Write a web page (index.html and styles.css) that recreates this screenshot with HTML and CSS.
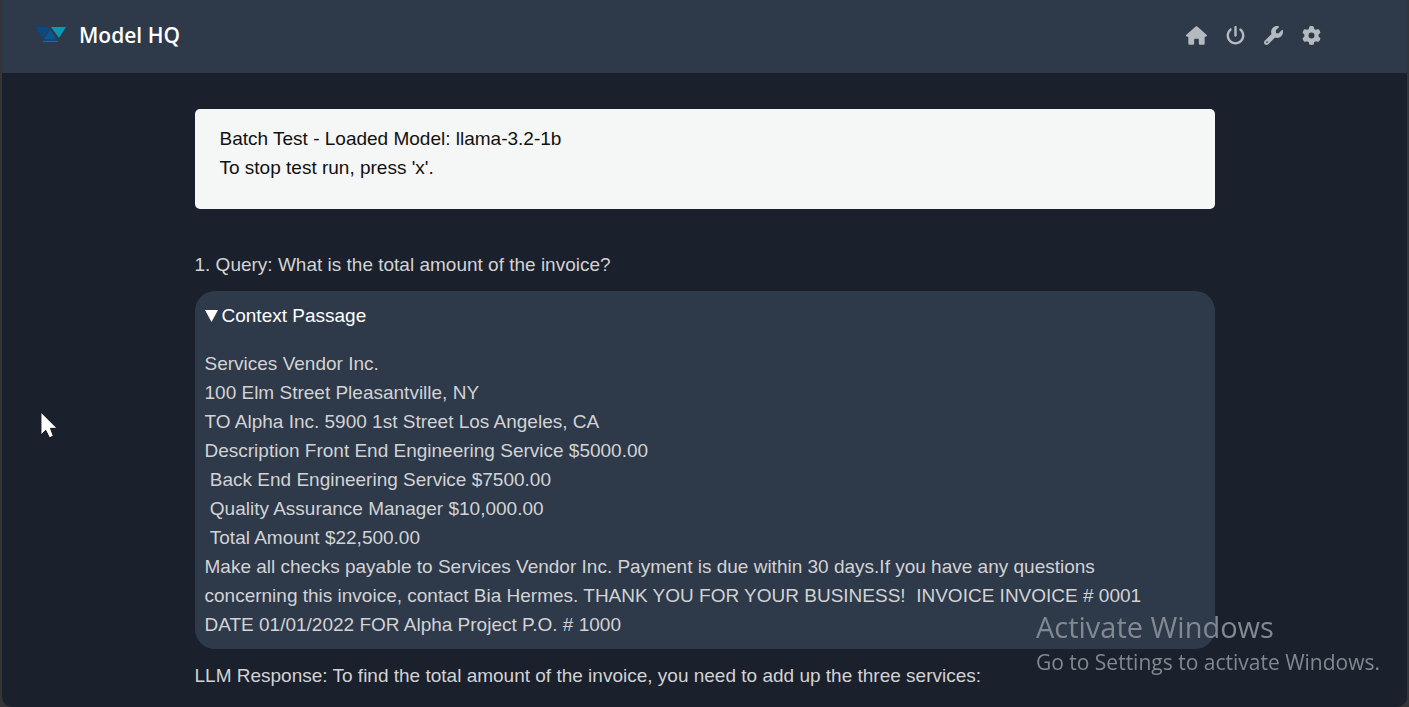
FILE: index.html
```html
<!DOCTYPE html>
<html lang="en">
<head>
<meta charset="utf-8">
<meta name="viewport" content="width=device-width, initial-scale=1">
<title>Model HQ</title>
<link rel="stylesheet" href="styles.css">
</head>
<body>
<div class="window">
  <header class="topbar">
    <a class="brand" href="#">
      <svg class="brand-logo" viewBox="0 0 32 18" aria-hidden="true">
        <path fill="#0b4a80" d="M0 1H15L8 12Z"/>
        <path fill="#0a5690" d="M15 3L21 13H9Z"/>
        <path fill="#0b4a80" d="M9 13H21L23 15H8Z"/>
        <path fill="#0d6f9c" d="M8 15H23V16H8Z"/>
        <path fill="#0a98b8" d="M16 1H31L24 12Z"/>
      </svg>
      <span class="brand-name">Model HQ</span>
    </a>
    <nav class="actions" aria-label="Main">
      <button class="action" type="button" aria-label="Home">
        <svg class="icon icon-wide" viewBox="0 0 576 512"><path d="M576 256c0 18-15 32-32 32h-32v184c0 22-18 40-40 40h-80c-22 0-40-18-40-40V376c0-18-14-32-32-32h-64c-18 0-32 14-32 32v96c0 22-18 40-40 40h-80c-22 0-40-18-40-40V288H32c-18 0-32-14-32-32 0-9 3-17 10-24L266 8c7-7 15-8 22-8s15 2 21 7l255 225c8 7 12 15 12 24z"/></svg>
      </button>
      <button class="action" type="button" aria-label="Power">
        <svg class="icon" viewBox="0 0 512 512"><path d="M288 32c0-17.700-14.300-32-32-32s-32 14.300-32 32l0 224c0 17.700 14.300 32 32 32s32-14.300 32-32l0-224zM143.500 120.600c13.600-11.300 15.400-31.500 4.100-45.100s-31.500-15.400-45.100-4.100C49.700 115.400 16 181.800 16 256c0 132.500 107.500 240 240 240s240-107.500 240-240c0-74.200-33.800-140.600-86.600-184.600c-13.600-11.300-33.800-9.400-45.100 4.100s-9.400 33.800 4.100 45.100c38.900 32.300 63.500 81 63.500 135.400c0 97.200-78.800 176-176 176s-176-78.800-176-176c0-54.400 24.700-103.100 63.500-135.400z"/></svg>
      </button>
      <button class="action" type="button" aria-label="Tools">
        <svg class="icon" viewBox="0 0 512 512"><path d="M352 320c88.400 0 160-71.600 160-160c0-15.300-2.200-30.100-6.200-44.200c-3.100-10.800-16.400-13.200-24.300-5.300l-76.800 76.800c-3 3-7.100 4.700-11.300 4.700L336 192c-8.800 0-16-7.200-16-16l0-57.400c0-4.200 1.700-8.300 4.700-11.300l76.800-76.800c7.900-7.900 5.400-21.200-5.300-24.300C382.100 2.200 367.300 0 352 0C263.600 0 192 71.600 192 160c0 19.100 3.400 37.500 9.500 54.500L19.900 396.100C7.200 408.800 0 426.100 0 444.100C0 481.600 30.400 512 67.900 512c18 0 35.300-7.200 48-19.900L297.500 310.500c17 6.200 35.400 9.500 54.500 9.500zM80 408a24 24 0 1 1 0 48 24 24 0 1 1 0-48z"/></svg>
      </button>
      <button class="action" type="button" aria-label="Settings">
        <svg class="icon" viewBox="0 0 512 512"><path d="M495.900 166.600c3.200 8.700 .5 18.400-6.400 24.600l-43.300 39.400c1.100 8.300 1.700 16.800 1.700 25.400s-.6 17.100-1.700 25.400l43.300 39.400c6.900 6.200 9.600 15.900 6.400 24.600c-4.400 11.900-9.700 23.300-15.800 34.300l-4.700 8.100c-6.600 11-14 21.400-22.100 31.200c-5.900 7.200-15.700 9.600-24.500 6.800l-55.700-17.700c-13.400 10.300-28.200 18.900-44 25.400l-12.500 57.100c-2 9.100-9 16.300-18.200 17.800c-13.800 2.300-28 3.500-42.500 3.500s-28.700-1.200-42.500-3.500c-9.200-1.500-16.200-8.700-18.200-17.800l-12.500-57.100c-15.800-6.500-30.600-15.100-44-25.400L83.100 425.900c-8.800 2.800-18.600 .3-24.500-6.800c-8.100-9.800-15.500-20.200-22.100-31.200l-4.700-8.100c-6.100-11-11.400-22.400-15.800-34.300c-3.200-8.700-.5-18.400 6.400-24.600l43.300-39.400C64.600 273.100 64 264.600 64 256s.6-17.100 1.700-25.400L22.400 191.200c-6.900-6.200-9.600-15.900-6.400-24.600c4.400-11.900 9.700-23.300 15.800-34.300l4.700-8.100c6.600-11 14-21.400 22.100-31.200c5.900-7.200 15.700-9.600 24.500-6.800l55.700 17.700c13.400-10.300 28.200-18.900 44-25.400l12.500-57.100c2-9.100 9-16.300 18.200-17.800C227.300 1.200 241.500 0 256 0s28.700 1.200 42.500 3.500c9.200 1.500 16.200 8.700 18.200 17.800l12.500 57.100c15.800 6.500 30.600 15.100 44 25.400l55.700-17.700c8.800-2.800 18.600-.3 24.500 6.800c8.100 9.800 15.500 20.200 22.100 31.200l4.700 8.100c6.100 11 11.400 22.400 15.800 34.300zM256 336a80 80 0 1 0 0-160 80 80 0 1 0 0 160z"/></svg>
      </button>
    </nav>
  </header>

  <main class="content">
    <section class="notice">
      <p>Batch Test - Loaded Model: llama-3.2-1b</p>
      <p>To stop test run, press 'x'.</p>
    </section>

    <p class="query">1. Query: What is the total amount of the invoice?</p>

    <details class="passage" open>
      <summary class="passage-title"><svg class="marker" viewBox="0 0 12 12" aria-hidden="true"><path d="M0 1H12L6 12Z"/></svg>Context Passage</summary>
      <div class="passage-text">Services Vendor Inc.
100 Elm Street Pleasantville, NY
TO Alpha Inc. 5900 1st Street Los Angeles, CA
Description Front End Engineering Service $5000.00
 Back End Engineering Service $7500.00
 Quality Assurance Manager $10,000.00
 Total Amount $22,500.00
Make all checks payable to Services Vendor Inc. Payment is due within 30 days.If you have any questions concerning this invoice, contact Bia Hermes. THANK YOU FOR YOUR BUSINESS!  INVOICE INVOICE # 0001 DATE 01/01/2022 FOR Alpha Project P.O. # 1000</div>
    </details>

    <p class="response">LLM Response: To find the total amount of the invoice, you need to add up the three services:</p>
  </main>
</div>

<svg class="cursor" viewBox="0 0 20 30" aria-hidden="true"><path d="M1 1V25L6 20L10 28L14 26L11 18H18Z"/></svg>

<aside class="watermark">
  <p class="watermark-title">Activate Windows</p>
  <p class="watermark-text">Go to Settings to activate Windows.</p>
</aside>
</body>
</html>
```

FILE: styles.css
```css
* {
  box-sizing: border-box;
}

body {
  margin: 0;
  background: #333536;
  color: #d2d3d4;
  font-family: "Liberation Sans", Arial, sans-serif;
  font-size: 19px;
  line-height: 29px;
}

p {
  margin: 0;
}

.window {
  min-height: 100vh;
  margin: 0 2px;
  background: #1a202c;
  border-radius: 0 0 10px 10px;
  overflow: hidden;
}

.topbar {
  display: flex;
  align-items: center;
  justify-content: space-between;
  padding: 20px 86px 23px 33px;
  background: #2e394a;
}

.brand {
  display: flex;
  align-items: center;
  gap: 12px;
  color: #fff;
  text-decoration: none;
}

.brand-logo {
  width: 32px;
  height: 18px;
}

.brand-name {
  font-family: "Open Sans", "Noto Sans", sans-serif;
  font-size: 21px;
  font-weight: 600;
  line-height: 30px;
}

.actions {
  display: flex;
  align-items: center;
  gap: 19px;
}

.action {
  display: flex;
  padding: 0;
  border: 0;
  background: none;
  color: #b4bac0;
  cursor: pointer;
}

.icon {
  width: 19px;
  height: 19px;
  fill: currentColor;
}

.icon-wide {
  width: 21px;
}

.content {
  max-width: 1020px;
  margin: 0 auto;
  padding: 36px 0 16px;
}

.notice {
  padding: 15px 25px 27px;
  background: #f5f6f6;
  border-radius: 5px;
  color: #111;
}

.query {
  margin-top: 41px;
}

.passage {
  margin-top: 12px;
  padding: 10px 25px 10px 10px;
  background: #2e394a;
  border-radius: 20px;
}

.passage-title {
  display: flex;
  align-items: center;
  gap: 4px;
  color: #fff;
  cursor: pointer;
  list-style: none;
}

.marker {
  width: 13px;
  height: 13px;
  fill: currentColor;
}

.passage-text {
  margin-top: 19px;
  white-space: pre-wrap;
}

.response {
  margin-top: 12px;
}

.cursor {
  position: absolute;
  top: 411px;
  left: 40px;
  width: 19px;
  height: 29px;
  fill: #fff;
  stroke: #111;
  pointer-events: none;
}

.watermark {
  position: fixed;
  right: 29px;
  bottom: 30px;
  color: #828890;
  font-family: "Open Sans", "Noto Sans", sans-serif;
  pointer-events: none;
}

.watermark-title {
  font-size: 29px;
  line-height: 40px;
}

.watermark-text {
  font-size: 21px;
  line-height: 30px;
}
```
